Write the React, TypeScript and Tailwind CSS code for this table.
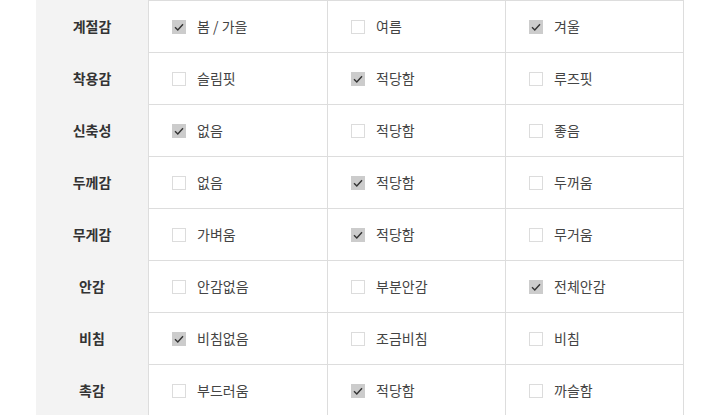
import React from "react";

type Row = { label: string; opts: [string, boolean][] };

const rows: Row[] = [
  { label: "계절감", opts: [["봄 / 가을", true], ["여름", false], ["겨울", true]] },
  { label: "착용감", opts: [["슬림핏", false], ["적당함", true], ["루즈핏", false]] },
  { label: "신축성", opts: [["없음", true], ["적당함", false], ["좋음", false]] },
  { label: "두께감", opts: [["없음", false], ["적당함", true], ["두꺼움", false]] },
  { label: "무게감", opts: [["가벼움", false], ["적당함", true], ["무거움", false]] },
  { label: "안감", opts: [["안감없음", false], ["부분안감", false], ["전체안감", true]] },
  { label: "비침", opts: [["비침없음", true], ["조금비침", false], ["비침", false]] },
  { label: "촉감", opts: [["부드러움", false], ["적당함", true], ["까슬함", false]] },
];

function Box({ checked }: { checked: boolean }) {
  if (checked) {
    return (
      <span className="flex h-[14px] w-[14px] shrink-0 items-center justify-center bg-[#cccccc]">
        <svg width="14" height="14" viewBox="0 0 14 14">
          <path d="M3 7.3 L5.8 10 L11 4.2" fill="none" stroke="#333" strokeWidth="1.4" />
        </svg>
      </span>
    );
  }
  return <span className="h-[14px] w-[14px] shrink-0 border border-[#dcdcdc] bg-white" />;
}

export default function App() {
  return (
    <div
      className="h-[415px] w-[720px] overflow-hidden bg-white"
      style={{ fontFamily: '"Noto Sans CJK KR", "Noto Sans", sans-serif' }}
    >
      <div className="ml-[36px] w-[648px] bg-[#f3f3f3]">
        {rows.map((r) => (
          <div key={r.label} className="grid h-[52px] grid-cols-[112px_179px_178px_179px]">
            <div className="flex items-center justify-center text-[14px] font-bold text-[#333]">{r.label}</div>
            {r.opts.map(([t, c], i) => (
              <div
                key={i}
                className="flex items-center gap-[11px] border-l border-t border-[#dddddd] bg-white pl-[23px] text-[14px] text-[#444] last:border-r"
              >
                <Box checked={c} />
                <span>{t}</span>
              </div>
            ))}
          </div>
        ))}
      </div>
    </div>
  );
}
